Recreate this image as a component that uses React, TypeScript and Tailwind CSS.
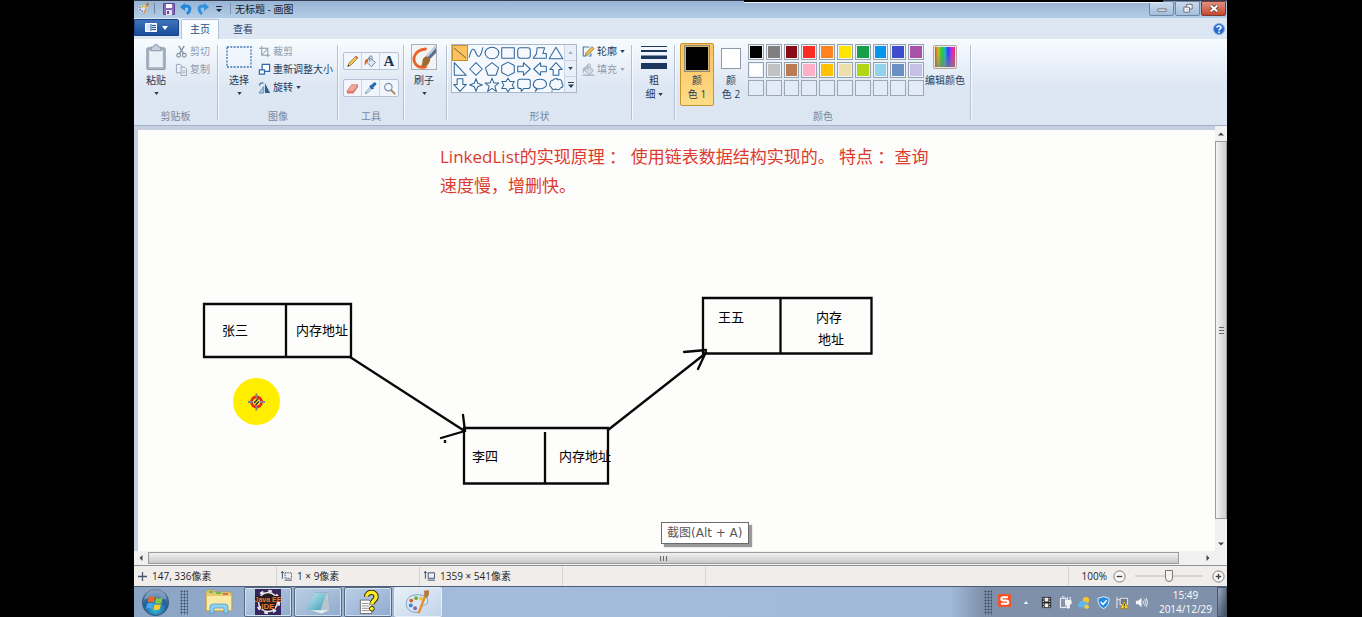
import type { ReactNode } from "react";

const SHAPES: { name: string; d: string }[] = [
  { name: "直线", d: "M2 3L14 13" },
  { name: "曲线", d: "M2 12C4 3 6 3 8 8S12 12 14 3" },
  { name: "椭圆", d: "M2 8a6 5 0 1 0 12 0a6 5 0 1 0-12 0" },
  { name: "矩形", d: "M2.5 3.5h11v9h-11z" },
  { name: "圆角矩形", d: "M4.5 3.5h7a2 2 0 0 1 2 2v5a2 2 0 0 1-2 2h-7a2 2 0 0 1-2-2v-5a2 2 0 0 1 2-2z" },
  { name: "多边形", d: "M5.500 3.500H12L10.500 8.500H13.500V12.500H2L5 8.500z" },
  { name: "三角形", d: "M8 3L14 13H2z" },
  { name: "直角三角形", d: "M3 2.500V13.500H13.500z" },
  { name: "菱形", d: "M8 2.500L13.500 8L8 13.500L2.500 8z" },
  { name: "五边形", d: "M8 2.500L13.800 7L11.500 13.500H4.500L2.200 7z" },
  { name: "六边形", d: "M8 2L13.500 5V11L8 14L2.500 11V5z" },
  { name: "右箭头", d: "M2.500 5.500h5v-3l6 5.500l-6 5.500v-3h-5z" },
  { name: "左箭头", d: "M13.500 5.500h-5v-3l-6 5.500l6 5.500v-3h5z" },
  { name: "上箭头", d: "M5.500 13.500v-5h-3l5.500-6l5.500 6h-3v5z" },
  { name: "下箭头", d: "M5.500 2.500v5h-3l5.500 6l5.500-6h-3v-5z" },
  { name: "四角星形", d: "M8 2.500L9.500 6.500L13.500 8L9.500 9.500L8 13.500L6.500 9.500L2.500 8L6.500 6.500z" },
  { name: "五角星形", d: "M8 2L9.600 6.300H14L10.500 9L11.800 13.600L8 11L4.200 13.600L5.500 9L2 6.300H6.400z" },
  { name: "六角星形", d: "M8 2L9.800 5H13.500L11.700 8L13.500 11H9.800L8 14L6.200 11H2.500L4.300 8L2.500 5H6.200z" },
  { name: "圆角矩形标注", d: "M4.500 3h7a2 2 0 0 1 2 2v4a2 2 0 0 1-2 2H8l-2.500 2.500v-2.500h-1a2 2 0 0 1-2-2v-4a2 2 0 0 1 2-2z" },
  { name: "椭圆形标注", d: "M5 11C0 9 2 3 8 3s8 6 2 8c-2 .5-3 .3-4 .2L4 13.500z" },
  { name: "云形标注", d: "M5 4c1-2 4-2 5-.5c2-1 4 1 3 3c2 1 1 4-1 4c-1 2-3 2-4 1c-2 1-4 0-4-1.500c-2-.5-2-3-.8-3.500C2.500 5 3.500 4 5 4zM4.500 12.500v1.500" },
];

const COLOURS = [
  { name: "黑色", bg: "bg-black" },
  { name: "灰色-50%", bg: "bg-[#7f7f7f]" },
  { name: "深红色", bg: "bg-[#8a0a15]" },
  { name: "红色", bg: "bg-[#fb2d22]" },
  { name: "橙色", bg: "bg-[#ff8420]" },
  { name: "黄色", bg: "bg-[#ffe600]" },
  { name: "绿色", bg: "bg-[#169e4a]" },
  { name: "青绿色", bg: "bg-[#0396ec]" },
  { name: "靛青色", bg: "bg-[#3d4ccc]" },
  { name: "紫色", bg: "bg-[#a852a8]" },
  { name: "白色", bg: "bg-white" },
  { name: "灰色-25%", bg: "bg-[#c2c2c2]" },
  { name: "褐色", bg: "bg-[#b97c55]" },
  { name: "玫瑰色", bg: "bg-[#ffb0c8]" },
  { name: "金色", bg: "bg-[#ffc103]" },
  { name: "浅黄色", bg: "bg-[#eddfad]" },
  { name: "酸橙色", bg: "bg-[#b1d614]" },
  { name: "淡青绿色", bg: "bg-[#92d2ea]" },
  { name: "蓝灰色", bg: "bg-[#6a8fc2]" },
  { name: "淡紫色", bg: "bg-[#c6bfe7]" },
];

function Caret({ muted = false }: { muted?: boolean }) {
  return (
    <svg viewBox="0 0 6 4" className="h-[3px] w-[5px] shrink-0" aria-hidden="true">
      <path d="M0 0H6L3 4z" fill={muted ? "#9aa6b6" : "#2b3d5b"} />
    </svg>
  );
}

function Group({ label, width, children }: { label: string; width: string; children: ReactNode }) {
  return (
    <section aria-label={label || undefined} className={`flex shrink-0 flex-col ${width}`}>
      <div className="flex min-h-0 flex-1">
        <div className="flex flex-1 flex-col">
          <div className="flex flex-1 items-start pt-[2px]">{children}</div>
          <div className="mb-[2px] h-[14px] text-center leading-[14px] text-[#7586a0]">{label}</div>
        </div>
        <div className="my-[5px] w-[2px] border-l border-[#b4c1d3] bg-white/70" />
      </div>
    </section>
  );
}

function BigButton({ text, icon, caret = true }: { text: string; icon: ReactNode; caret?: boolean }) {
  return (
    <button type="button" className="flex flex-col items-center whitespace-nowrap">
      <span className="flex h-[30px] items-center justify-center">{icon}</span>
      <span className="h-[18px] leading-[16px]">{text}</span>
      <span className="flex h-[6px] items-center">{caret && <Caret />}</span>
    </button>
  );
}

function SmallButton({ text, icon, muted = false, caret = false }: { text: string; icon: ReactNode; muted?: boolean; caret?: boolean }) {
  return (
    <button type="button" className={`flex h-[18px] items-center gap-[2px] whitespace-nowrap ${muted ? "text-[#8e9bae]" : ""}`}>
      {icon}
      <span>{text}</span>
      {caret && <span className="ml-[1px] flex"><Caret muted={muted} /></span>}
    </button>
  );
}

const ico = "h-[13px] w-[13px] shrink-0";

function PaletteIcon({ className }: { className: string }) {
  return (
    <svg viewBox="0 0 28 28" className={className} aria-hidden="true">
      <path d="M13 6C5 6 1 11 2 17c1 5 6 8 12 7c4-1 2-4 4-6s6-1 6-6c0-4-5-6-11-6z" fill="#d7e8f4" stroke="#7aa0bf" />
      <circle cx="7" cy="12" r="2" fill="#e2592c" />
      <circle cx="12" cy="9.500" r="2" fill="#69b33d" />
      <circle cx="6.500" cy="17" r="2" fill="#3d83cf" />
      <circle cx="11" cy="20" r="2" fill="#8d63b3" />
      <circle cx="17" cy="10" r="2" fill="#efc530" />
      <path d="M22 6L15 24" stroke="#e58f2e" strokeWidth="2.500" strokeLinecap="round" />
      <path d="M20 2c1 2 0 4 1 6l3 1c1-3 2-4 1-8z" fill="#b9773f" />
    </svg>
  );
}

function Pencil() {
  return (
    <svg viewBox="0 0 16 16" className={ico} aria-hidden="true">
      <path d="M2 14L3.500 10L12 1.500L14.500 4L6 12.500z" fill="#f4c252" stroke="#7d6435" strokeWidth=".8" />
      <path d="M11 2.500L12.500 1L15 3.500L13.500 5z" fill="#d9685b" />
      <path d="M2 14L2.800 11.800L4.200 13.200z" fill="#222" />
    </svg>
  );
}

function Bucket({ muted = false }: { muted?: boolean }) {
  return (
    <svg viewBox="0 0 16 16" className={ico} aria-hidden="true">
      <path d="M6 3L14 9L9 14.500L3.500 9z" fill={muted ? "#d3dae3" : "#dce9f4"} stroke={muted ? "#98a4b3" : "#5a7698"} />
      <path d="M7 8V2.500a1.500 1.500 0 0 1 3 0V6" fill="none" stroke={muted ? "#98a4b3" : "#5a7698"} />
      <path d="M5 4.500C1 5 .5 8 1 13C3 11 3 9 5 8z" fill={muted ? "#aeb7c3" : "#e4602e"} />
      {muted && <path d="M1 14h14v2H1z" fill="#b1bac6" />}
    </svg>
  );
}

function ToolBar({ children }: { children: ReactNode }) {
  return <div className="flex h-[18px] divide-x divide-[#ccd6e3] rounded-[2px] border border-[#b5c2d4] bg-[#f1f6fc]">{children}</div>;
}

function ToolButton({ name, children }: { name: string; children: ReactNode }) {
  return (
    <button type="button" aria-label={name} className="flex w-[18px] items-center justify-center">
      {children}
    </button>
  );
}

function TitleBar() {
  return (
    <header className="relative flex h-[18px] items-center border-t border-[#333c50] bg-linear-to-b from-[#98b4d4] to-[#b4cce6] pb-[2px] pl-[3px]">
      <PaletteIcon className="h-[13px] w-[13px]" />
      <span className="ml-[4px] h-[11px] w-px bg-[#6f87a5]" />
      <button type="button" aria-label="保存" className="ml-[8px]">
        <svg viewBox="0 0 12 12" className="h-[12px] w-[12px]">
          <path d="M.5.5h11v11H.5z" fill="#8669b5" stroke="#5e4691" />
          <path d="M3 1h6v4H3z" fill="#fff" />
          <path d="M3 7h6v5H3z" fill="#e7def4" />
          <path d="M4 8h2v3H4z" fill="#5e4691" />
        </svg>
      </button>
      <button type="button" aria-label="撤消" className="ml-[5px]">
        <svg viewBox="0 0 12 12" className="h-[12px] w-[12px]">
          <path d="M3 4C10 1 12 6 7 11" fill="none" stroke="#2386d8" strokeWidth="3" />
          <path d="M0 4L5 0V8z" fill="#2386d8" />
        </svg>
      </button>
      <button type="button" aria-label="重做" className="ml-[5px]">
        <svg viewBox="0 0 12 12" className="h-[12px] w-[12px]">
          <path d="M9 4C2 1 0 6 5 11" fill="none" stroke="#2f93dd" strokeWidth="3" />
          <path d="M12 4L7 0V8z" fill="#2f93dd" />
        </svg>
      </button>
      <button type="button" aria-label="自定义快速访问工具栏" className="ml-[7px]">
        <svg viewBox="0 0 6 6" className="h-[6px] w-[6px]">
          <path d="M0 0h6v1H0zM0 3h6L3 6z" fill="#1b2a40" />
        </svg>
      </button>
      <span className="ml-[8px] h-[11px] w-px bg-[#7d94b1]" />
      <h1 className="ml-[4px] leading-[14px] text-[#141c28]">无标题 - 画图</h1>
      <div className="ml-auto flex h-full gap-px pr-px">
        <button type="button" aria-label="最小化" className="flex w-[25px] items-center justify-center rounded-b-[2px] border border-[#6d86a6] bg-linear-to-b from-[#c9d9eb] to-[#a4bedb]">
          <svg viewBox="0 0 12 12" className="h-[11px] w-[12px]"><path d="M1.500 6.500h9v2.500h-9z" fill="#fff" stroke="#5f6873" /></svg>
        </button>
        <button type="button" aria-label="向下还原" className="flex w-[25px] items-center justify-center rounded-b-[2px] border border-[#6d86a6] bg-linear-to-b from-[#c9d9eb] to-[#a4bedb]">
          <svg viewBox="0 0 12 12" className="h-[11px] w-[12px]">
            <path d="M4.500 1.500h6v5h-6z" fill="#fff" stroke="#5f6873" />
            <path d="M1.500 4.500h6v5.500h-6z" fill="#fff" stroke="#5f6873" />
            <path d="M4 7h1.500v1H4z" fill="#5f6873" />
          </svg>
        </button>
        <button type="button" aria-label="关闭" className="flex w-[25px] items-center justify-center rounded-b-[2px] border border-[#7c3a34] bg-linear-to-b from-[#dd9080] to-[#c8452b]">
          <svg viewBox="0 0 12 12" className="h-[11px] w-[12px]">
            <path d="M2.500 3L9.500 9M9.500 3L2.500 9" stroke="#6d4640" strokeWidth="4" />
            <path d="M2.500 3L9.500 9M9.500 3L2.500 9" stroke="#fff" strokeWidth="2.200" />
          </svg>
        </button>
      </div>
      <div className="absolute -top-px right-[64px] left-[610px] h-[3px] border-b border-[#e8f1f5] bg-black" />
    </header>
  );
}

function Tabs() {
  return (
    <nav className="flex h-[21px] bg-[#dde7f4] pt-px">
      <button type="button" aria-label="画图" className="flex h-[17px] w-[45px] items-center justify-center gap-[5px] rounded-tr-[2px] border border-[#17448a] bg-linear-to-b from-[#3f74b8] to-[#1b4c9c]">
        <svg viewBox="0 0 12 9" className="h-[9px] w-[12px]">
          <path d="M.5.5h11v8H.5z" fill="#dbe8f8" stroke="#fff" />
          <path d="M6 1v7M7 2.500h4M7 4.500h4M7 6.500h4" stroke="#2a5ca8" />
        </svg>
        <svg viewBox="0 0 6 4" className="h-[4px] w-[6px]"><path d="M0 0h6L3 4z" fill="#fff" /></svg>
      </button>
      <button type="button" className="ml-[2px] w-[38px] rounded-t-[2px] border border-b-0 border-[#b3c3d9] bg-[#f9fcff] pb-px text-[#254a80]">主页</button>
      <button type="button" className="ml-[4px] w-[40px] text-[#2f415e]">查看</button>
      <button type="button" aria-label="帮助" className="mr-[2px] ml-auto">
        <svg viewBox="0 0 12 12" className="h-[12px] w-[12px]">
          <circle cx="6" cy="6" r="5.500" fill="#2968d2" stroke="#86abe0" />
          <path d="M4 4.700C4 2.500 8 2.500 8 4.700C8 6 6 6 6 7.400" fill="none" stroke="#fff" strokeWidth="1.500" />
          <circle cx="6" cy="9.200" r=".9" fill="#fff" />
        </svg>
      </button>
    </nav>
  );
}

function Ribbon() {
  return (
    <div className="flex h-[87px] overflow-hidden border-t border-b border-t-[#fafdff] border-b-[#a5b2c6] bg-linear-to-b from-[#f7fbff] via-[#dde7f3] via-55% to-[#dce6f3] text-[#26395a]">
      <Group label="剪贴板" width="w-[85px]">
        <div className="ml-[11px]">
          <BigButton
            text="粘贴"
            icon={
              <svg viewBox="0 0 22 28" className="h-[27px] w-[22px]">
                <rect x="1.500" y="4" width="19" height="22.500" rx="1" fill="#a9b4c3" stroke="#8996a8" />
                <path d="M4 7h14v17H4z" fill="#eaf0f7" />
                <path d="M6 3h2.500a2.500 2.500 0 0 1 5 0H16v4H6z" fill="#c7d0dc" stroke="#8996a8" />
              </svg>
            }
          />
        </div>
        <div className="ml-[8px]">
          <SmallButton muted text="剪切" icon={
            <svg viewBox="0 0 14 14" className={ico}>
              <path d="M4 1L9 9M10 1L5 9" stroke="#8793a5" strokeWidth="1.500" />
              <circle cx="4" cy="11" r="2" fill="none" stroke="#8793a5" strokeWidth="1.300" />
              <circle cx="10" cy="11" r="2" fill="none" stroke="#8793a5" strokeWidth="1.300" />
            </svg>} />
          <SmallButton muted text="复制" icon={
            <svg viewBox="0 0 14 14" className={ico}>
              <path d="M1.500 1.500h4l2 2v7h-6z" fill="#eaf0f7" stroke="#97a3b4" />
              <path d="M6.500 4.500h4l2 2v7h-6z" fill="#eaf0f7" stroke="#97a3b4" />
              <path d="M8 8.500h3M8 10.500h3" stroke="#97a3b4" />
            </svg>} />
        </div>
      </Group>

      <Group label="图像" width="w-[120px]">
        <div className="ml-[7px]">
          <BigButton text="选择" icon={
            <svg viewBox="0 0 26 22" className="h-[22px] w-[26px]">
              <rect x="1" y="1" width="24" height="20" fill="#f0f6fd" fillOpacity=".6" stroke="#3b75b3" strokeWidth="1.300" strokeDasharray="2 1.300" />
            </svg>} />
        </div>
        <div className="ml-[6px]">
          <SmallButton muted text="裁剪" icon={
            <svg viewBox="0 0 14 14" className={ico}><path d="M4 1v10h9M1 3.500h9.500V13M4 11L11 3" fill="none" stroke="#8592a5" /></svg>} />
          <SmallButton text="重新调整大小" icon={
            <svg viewBox="0 0 14 14" className={ico}>
              <path d="M4.500 1.500h8v7.500h-8z" fill="#fff" stroke="#2f68a8" strokeWidth="1.300" />
              <path d="M1.500 7.500h5.500v4.500h-5.500z" fill="#fff" stroke="#2f68a8" strokeWidth="1.300" />
            </svg>} />
          <SmallButton caret text="旋转" icon={
            <svg viewBox="0 0 14 14" className={ico}>
              <path d="M7.500 2.500V13H13z" fill="#2b5d92" />
              <path d="M6 6v7H1z" fill="#a9cbe6" stroke="#5586b4" strokeWidth=".8" />
              <path d="M1.500 5C2 2 4 1.500 6 2.500" fill="none" stroke="#3a7ab8" strokeWidth="1.300" />
            </svg>} />
        </div>
      </Group>

      <Group label="工具" width="w-[66px]">
        <div className="mt-[10px] ml-[4px] flex flex-col gap-[9px]">
          <ToolBar>
            <ToolButton name="铅笔"><Pencil /></ToolButton>
            <ToolButton name="用颜色填充"><Bucket /></ToolButton>
            <ToolButton name="文本"><span className="font-['Liberation_Serif',serif] text-[15px] font-bold leading-[16px] text-[#1c3350]">A</span></ToolButton>
          </ToolBar>
          <ToolBar>
            <ToolButton name="橡皮擦">
              <svg viewBox="0 0 14 14" className={ico}>
                <path d="M6 3h7L8 10H1z" fill="#f4a79c" stroke="#c8665b" strokeWidth=".7" />
                <path d="M1 10h7v2.500H1zM8 10l5-7v2.500l-5 7z" fill="#df7468" />
              </svg>
            </ToolButton>
            <ToolButton name="颜色选取器">
              <svg viewBox="0 0 14 14" className={ico}>
                <path d="M1.500 12.500L2.500 10L7 5.500L8.500 7L4 11.500z" fill="#dcecfa" stroke="#5c7fa5" strokeWidth=".8" />
                <path d="M6.500 4L10 7.500" stroke="#204e8b" strokeWidth="2" />
                <path d="M8 5.500L11.500 2" stroke="#2b6bb8" strokeWidth="3.500" strokeLinecap="round" />
              </svg>
            </ToolButton>
            <ToolButton name="放大镜">
              <svg viewBox="0 0 14 14" className={ico}>
                <path d="M8.500 8.500L12.500 12.500" stroke="#b08a52" strokeWidth="2.200" strokeLinecap="round" />
                <circle cx="5.800" cy="5.500" r="4" fill="#edf6fd" stroke="#7f8fa3" strokeWidth="1.200" />
              </svg>
            </ToolButton>
          </ToolBar>
        </div>
      </Group>

      <Group label="" width="w-[43px]">
        <div className="ml-[6px]">
          <BigButton text="刷子" icon={
            <svg viewBox="0 0 26 26" className="h-[26px] w-[26px]">
              <rect x=".5" y=".5" width="25" height="25" fill="#f3f3f3" stroke="#aab0b8" />
              <path d="M13 5C3 6-1 14 3 20c2 3 6 4 10 3" fill="none" stroke="#e9622b" strokeWidth="2.800" strokeLinecap="round" transform="translate(1.500 0)" />
              <path d="M25 1v8l-7 7l-4-3z" fill="#5b6f91" />
              <path d="M25 1L14 13l2 1L25 4z" fill="#c9d5e5" />
              <path d="M12 15c1-2 3-3 5-2s3 3 1 6c-2 4-6 4-8 3c2-2 1-5 2-7z" fill="#a16a2f" />
            </svg>} />
        </div>
      </Group>

      <Group label="形状" width="w-[185px]">
        <div className="mt-[2px] ml-[3px] flex h-[49px] border border-[#a9b7cb] bg-[#f5f9fe]">
          <div className="grid grid-cols-7">
            {SHAPES.map((s, i) => (
              <button key={s.name} type="button" aria-label={s.name} className={`h-[16px] w-[16px] ${i === 0 ? "border border-[#c5912f] bg-[#fbc25e]" : ""}`}>
                <svg viewBox={i === 0 ? "1 1 14 14" : "1 1 14 14"} className="h-full w-full">
                  <path d={s.d} fill="none" stroke={i === 0 ? "#66552f" : "#2d6699"} strokeWidth=".9" strokeLinejoin="round" />
                </svg>
              </button>
            ))}
          </div>
          <div className="flex w-[12px] flex-col divide-y divide-[#cbd6e4] border-l border-[#cbd6e4] bg-[#e8eff8]">
            <button type="button" aria-label="上一行" className="flex flex-1 items-center justify-center"><svg viewBox="0 0 6 4" className="h-[3px] w-[5px]"><path d="M0 4h6L3 0z" fill="#a3afc0" /></svg></button>
            <button type="button" aria-label="下一行" className="flex flex-1 items-center justify-center"><Caret /></button>
            <button type="button" aria-label="更多形状" className="flex flex-1 items-center justify-center"><svg viewBox="0 0 6 6" className="h-[6px] w-[6px]"><path d="M0 0h6v1H0zM0 2.500h6L3 6z" fill="#2b3d5b" /></svg></button>
          </div>
        </div>
        <div className="ml-[5px]">
          <SmallButton caret text="轮廓" icon={
            <svg viewBox="0 0 16 16" className={ico}>
              <path d="M9 2.500H1.500v11h4M11 10v3.500H8" fill="none" stroke="#3d76ab" strokeWidth="1.300" />
              <path d="M4 13L5 9.500L12 2L15 4.500L7.500 12z" fill="#f1bd4e" stroke="#7d6435" strokeWidth=".8" />
            </svg>} />
          <SmallButton muted caret text="填充" icon={<Bucket muted />} />
        </div>
      </Group>

      <Group label="" width="w-[43px]">
        <button type="button" className="ml-[8px] flex flex-col items-center pt-[4px] leading-[14px]">
          <svg viewBox="0 0 26 23" className="h-[23px] w-[26px]"><path d="M0 0h26v1H0zM0 4h26v2H0zM0 9.500h26v3.500H0zM0 17h26v6H0z" fill="#1c375f" /></svg>
          <span className="mt-[4px]">粗</span>
          <span className="flex items-center gap-[2px]">细<Caret /></span>
        </button>
      </Group>

      <Group label="颜色" width="w-[296px]">
        <button type="button" className="mt-px ml-[4px] flex h-[63px] w-[34px] flex-col items-center rounded-[2px] border border-[#c8922f] bg-linear-to-b from-[#fbc261] to-[#fddc86] leading-[14px]">
          <span className="mt-px h-[27px] w-[26px] border border-[#8f8a78] bg-black outline-1 -outline-offset-2 outline-[#d5b878]" />
          <span className="mt-[1px]">颜</span>
          <span>色 1</span>
        </button>
        <button type="button" className="ml-[4px] flex w-[26px] flex-col items-center leading-[14px]">
          <span className="mt-[6px] h-[21px] w-[20px] border border-[#8e99a8] bg-white" />
          <span className="mt-[4px]">颜</span>
          <span className="whitespace-nowrap">色 2</span>
        </button>
        <div className="mt-[2px] ml-[4px] grid w-[176px] grid-cols-10 gap-[2px]">
          {COLOURS.map((c) => (
            <button key={c.name} type="button" aria-label={c.name} className="h-[16px] border border-[#98a1ae] bg-[#eef3f8] p-px">
              <span className={`block h-full w-full ${c.bg}`} />
            </button>
          ))}
          {Array.from({ length: 10 }, (_, i) => (
            <button key={i} type="button" aria-label={`自定义颜色 ${i + 1}`} className="h-[16px] border border-[#9aa7b9] bg-[#e3ebf6]" />
          ))}
        </div>
        <div className="ml-[1px]">
          <BigButton caret={false} text="编辑颜色" icon={
            <svg viewBox="0 0 24 24" className="h-[24px] w-[24px]">
              <defs>
                <linearGradient id="hue">
                  <stop offset="0" stopColor="#f0402a" /><stop offset=".15" stopColor="#c6c51c" /><stop offset=".35" stopColor="#1fcb3c" />
                  <stop offset=".5" stopColor="#26b4d0" /><stop offset=".65" stopColor="#2546ee" /><stop offset=".85" stopColor="#d32be0" /><stop offset="1" stopColor="#ee3550" />
                </linearGradient>
                <linearGradient id="fade" x1="0" x2="0" y1="0" y2="1"><stop offset=".3" stopColor="#808080" stopOpacity="0" /><stop offset="1" stopColor="#808080" stopOpacity=".7" /></linearGradient>
              </defs>
              <rect x=".5" y=".5" width="23" height="23" rx="1.500" fill="#efe5e0" stroke="#b3a6a4" />
              <path d="M2 2h20v20H2z" fill="url(#hue)" />
              <path d="M2 2h20v20H2z" fill="url(#fade)" />
            </svg>} />
        </div>
      </Group>
    </div>
  );
}

function Drawing() {
  const colon = <span className="font-['Noto_Sans_CJK_TC',sans-serif]">：</span>;
  return (
    <main className="relative min-w-0 flex-1 overflow-hidden bg-[#fdfdfc] text-[13px] leading-[22px] text-black">
      <svg viewBox="138 130 760 420" className="absolute top-0 left-0 h-[420px] w-[760px]" fill="none" stroke="#080808" strokeWidth="2.300" aria-hidden="true">
        <path d="M204 304H351V357H204zM286 304V358" />
        <path d="M464 428H608V483.500H464zM545 432V483" />
        <path d="M703 298H871.500V353.500H703zM780.500 298V353" />
        <path d="M350 357L463 430M463 415L465 431L441 438M608 430L706 353M684 352L706 350M706 352L698 369" strokeLinecap="round" />
        <path d="M445 440v3" />
        <circle cx="256.500" cy="401.500" r="23.500" fill="#ffee00" stroke="none" />
        <circle cx="256.500" cy="402" r="5" stroke="#ed2415" strokeWidth="2.800" />
        <path d="M256.500 393.500v5M256.500 405.500v5M248 402h5M260 402h5" stroke="#8a7f8c" strokeWidth="2" />
        <path d="M254 403L258 399M255.500 405L259 401.500" stroke="#272b55" strokeWidth="1.400" />
      </svg>
      <div className="absolute top-[12px] left-[302px] text-[17px] leading-[29px] whitespace-nowrap text-[#dc3a2f]">
        <div className="flex whitespace-pre">
          <span>LinkedList的实现原理</span>
          {colon}
          <span>{"  使用链表数据结构实现的。 特点"}</span>
          {colon}
          <span>{" 查询"}</span>
        </div>
        <div>速度慢，增删快。</div>
      </div>
      <span className="absolute top-[189px] left-[84px]">张三</span>
      <span className="absolute top-[189px] left-[158px]">内存地址</span>
      <span className="absolute top-[315px] left-[334px]">李四</span>
      <span className="absolute top-[315px] left-[421px]">内存地址</span>
      <span className="absolute top-[176px] left-[580px]">王五</span>
      <span className="absolute top-[176px] left-[678px]">内存</span>
      <span className="absolute top-[198px] left-[680px]">地址</span>
      <div role="tooltip" className="absolute top-[392px] left-[523px] h-[22px] border border-[#6b6b6b] bg-white px-[5px] font-['DejaVu_Sans','Noto_Sans_CJK_SC',sans-serif] text-[12px] leading-[20px] text-[#585858] shadow-[3px_3px_1px_#9a9a9a]">截图(Alt + A)</div>
    </main>
  );
}

function Arrow({ d }: { d: string }) {
  return <svg viewBox="0 0 6 6" className="h-[6px] w-[6px]" aria-hidden="true"><path d={d} fill="#444" /></svg>;
}

function StatusBar() {
  const cell = "flex w-[143px] shrink-0 items-center gap-[5px] border-r border-[#d8d5d3] pl-[4px]";
  return (
    <footer className="flex h-[21px] border-t border-[#8f9194] bg-[#f0edeb] text-[#1f1f1f]">
      <div className={cell}>
        <svg viewBox="0 0 10 10" className="h-[9px] w-[9px]"><path d="M5 0v10M0 5h10" stroke="#4a5568" strokeWidth="1.400" /></svg>147, 336像素
      </div>
      <div className={cell}>
        <svg viewBox="0 0 12 10" className="h-[10px] w-[11px]"><path d="M1.500 0v8M0 2l1.500-2L3 2M4 9.500h8" fill="none" stroke="#334a6c" /><path d="M4.500 1.500h7v6h-7z" fill="none" stroke="#334a6c" strokeDasharray="1.500 1" /></svg>1 × 9像素
      </div>
      <div className={cell}>
        <svg viewBox="0 0 12 10" className="h-[10px] w-[11px]"><path d="M1.500 0v8M0 2l1.500-2L3 2M4 9.500h8M4.500 1.500h7v6h-7z" fill="none" stroke="#334a6c" /></svg>1359 × 541像素
      </div>
      <div className={cell} />
      <div className="ml-auto flex items-center border-l border-[#d8d5d3] pr-[2px] pl-[13px]">
        <label htmlFor="zoom">100%</label>
        <button type="button" aria-label="缩小" className="ml-[6px]"><svg viewBox="0 0 14 14" className="h-[13px] w-[13px]"><circle cx="7" cy="7" r="6" fill="#fbfbfb" stroke="#747474" /><path d="M4 7h6" stroke="#444" strokeWidth="1.500" /></svg></button>
        <input
          id="zoom"
          type="range"
          min="0"
          max="100"
          defaultValue="50"
          className="mx-[9px] h-[14px] w-[68px] appearance-none bg-linear-to-b from-transparent from-45% via-[#9a9a9a] via-50% to-transparent to-55% [&::-webkit-slider-thumb]:h-[12px] [&::-webkit-slider-thumb]:w-[8px] [&::-webkit-slider-thumb]:appearance-none [&::-webkit-slider-thumb]:rounded-b-[4px] [&::-webkit-slider-thumb]:border [&::-webkit-slider-thumb]:border-[#777] [&::-webkit-slider-thumb]:bg-[#f3f3f3]"
        />
        <button type="button" aria-label="放大"><svg viewBox="0 0 14 14" className="h-[13px] w-[13px]"><circle cx="7" cy="7" r="6" fill="#fbfbfb" stroke="#747474" /><path d="M4 7h6M7 4v6" stroke="#444" strokeWidth="1.500" /></svg></button>
      </div>
    </footer>
  );
}

function Grip() {
  return <span className="h-[25px] w-[8px] shrink-0 bg-[radial-gradient(circle,#3f4f66_0.8px,transparent_1.2px)] bg-[size:3px_3px]" />;
}

function TaskButton({ name, active = false, children }: { name: string; active?: boolean; children: ReactNode }) {
  return (
    <button type="button" aria-label={name} className={`flex h-full w-[48px] items-center justify-center rounded-[2px] border ${active ? "border-[#e6eef8] bg-linear-to-br from-[#e9f0f8] to-[#c2d4e9]" : "border-[#56697f] bg-linear-to-br from-[#bccee5] to-[#8fabcf] shadow-[inset_0_0_0_1px_#d3e0f0]"}`}>
      {children}
    </button>
  );
}

const tray = "h-[13px] w-[13px]";

function TaskBar() {
  return (
    <div className="flex h-[31px] items-center border-t border-[#4c5e78] bg-linear-to-r from-[#8ba3c3] via-[#a3bcdb] via-30% to-[#a0b9d8]">
      <button type="button" aria-label="开始" className="ml-[7px] shrink-0">
        <svg viewBox="0 0 30 30" className="h-[29px] w-[29px]">
          <defs><radialGradient id="orb" cx=".5" cy=".75" r=".7"><stop offset="0" stopColor="#38bfe0" /><stop offset=".6" stopColor="#22609a" /><stop offset="1" stopColor="#5c7fa6" /></radialGradient></defs>
          <circle cx="15" cy="15" r="13.500" fill="url(#orb)" stroke="#315178" />
          <path d="M3.500 12a11.500 11 0 0 1 23 0c-8-3-15-3-23 0z" fill="#fff" opacity=".28" />
          <path d="M8 9.500c2.500-1.500 4.500-1 6.500 0L13.200 15c-2-1-4-1.200-6.500 0z" fill="#f0642b" />
          <path d="M15.700 10c2.300 1 4.300 1 6.800 0L21 15.500c-2.300 1-4.300 1-6.600 0z" fill="#8bc63f" />
          <path d="M6.400 16.200c2.500-1.200 4.500-1 6.500 0l-1.400 5.300c-2-1-4-1.200-6.300 0z" fill="#4aa8ec" />
          <path d="M14.200 16.700c2.300 1 4.200 1 6.500 0l-1.400 5.300c-2.300 1-4.300 1-6.500 0z" fill="#fbcb2c" />
        </svg>
      </button>
      <span className="ml-[10px] flex"><Grip /></span>
      <div className="ml-[8px] flex h-full gap-[2px]">
        <button type="button" aria-label="资源管理器" className="flex w-[46px] items-center justify-center">
          <svg viewBox="0 0 28 26" className="h-[26px] w-[28px]">
            <path d="M1 3l2-2h6l1 2h15l2 2v17H1z" fill="#e8c96b" stroke="#b99842" strokeWidth=".7" />
            <path d="M2 7h24v14H2z" fill="#faeaa6" />
            <path d="M4 2h4v2H4zM11 3h5v2h-5z" fill="#70b75f" /><path d="M18 4h5v2h-5z" fill="#da6b5c" />
            <path d="M5 24v-6q0-3 3-3h12q3 0 3 3v6h-4v-5H9v5z" fill="#91d0f0" stroke="#4e9fcf" strokeWidth=".8" />
          </svg>
        </button>
        <TaskButton name="Java EE IDE">
          <svg viewBox="0 0 26 26" className="h-[26px] w-[26px]">
            <path d="M0 0h26v26H0z" fill="#35265c" />
            <circle cx="13" cy="13" r="9.500" fill="#25191d" stroke="#e7e5e8" strokeWidth="1.500" />
            <circle cx="13" cy="13" r="11" fill="none" stroke="#e7e5e8" strokeWidth="2.500" strokeDasharray="3.600 5.040" />
            <path d="M0 7h26v6H0zM6 13h14v7H6z" fill="#2b1a20" />
            <text x="13" y="13" textAnchor="middle" fontSize="7" fontWeight="bold" fontFamily="Liberation Sans, sans-serif" fill="#e87c2e">Java EE</text>
            <text x="13" y="19.500" textAnchor="middle" fontSize="8" fontWeight="bold" fontFamily="Liberation Sans, sans-serif" fill="#e87c2e">IDE</text>
          </svg>
        </TaskButton>
        <TaskButton name="记事本">
          <svg viewBox="0 0 26 26" className="h-[25px] w-[26px]">
            <path d="M9 3h14l2 18l-8 4L3 21z" fill="#e9eef2" stroke="#8a9aa8" strokeWidth=".6" />
            <defs><linearGradient id="note" x1="0" x2="1" y1="0" y2="1"><stop offset="0" stopColor="#c8ebf3" /><stop offset="1" stopColor="#3d9db7" /></linearGradient></defs>
            <path d="M9 3h13l-6 18H1z" fill="url(#note)" />
            <path d="M22 3l3 18l-9 0z" fill="#b7c4cd" />
          </svg>
        </TaskButton>
        <TaskButton name="帮助文档">
          <svg viewBox="0 0 24 26" className="h-[25px] w-[23px]">
            <path d="M3.500 10.500h9l3 3v11h-12z" fill="#fff" stroke="#6b6b6b" />
            <path d="M5 14h7M5 16.500h8M5 19h8M5 21.500h8" stroke="#8d8d8d" />
            <path d="M10 7C10 1 20 1 20 7c0 4-4.500 4-4.500 8" fill="none" stroke="#2e2b12" strokeWidth="5.500" />
            <path d="M10 7C10 1 20 1 20 7c0 4-4.500 4-4.500 8" fill="none" stroke="#ffed22" strokeWidth="3.500" />
            <circle cx="15.500" cy="19.500" r="2.500" fill="#ffed22" stroke="#2e2b12" />
          </svg>
        </TaskButton>
        <TaskButton name="画图" active><PaletteIcon className="h-[27px] w-[28px]" /></TaskButton>
      </div>
      <div className="ml-auto flex h-full items-center bg-linear-to-r from-transparent to-[#7f90aa] to-12% pl-[34px]">
        <Grip />
        <button type="button" aria-label="搜狗输入法" className="mb-[4px] ml-[6px]">
          <svg viewBox="0 0 13 13" className="h-[13px] w-[13px]"><rect width="13" height="13" rx="1" fill="#f0542a" /><path d="M10 3.200H5.500C2.500 3.200 2.500 6.500 5.500 6.500H8C11 6.500 11 9.800 8 9.800H3" fill="none" stroke="#fff" strokeWidth="2" /></svg>
        </button>
        <button type="button" aria-label="显示隐藏的图标" className="ml-[12px]"><svg viewBox="0 0 6 4" className="h-[3px] w-[6px]"><path d="M0 4h6L3 0z" fill="#edf2f8" /></svg></button>
        <div className="ml-[11px] flex gap-[6px]">
          <svg viewBox="0 0 14 14" className={tray}><path d="M2 1h10v12H2z" fill="#222" /><path d="M5 2h4v4H5zM5 8h4v4H5z" fill="#eee" /><path d="M3.500 2v11M10.500 2v11" stroke="#fff" strokeDasharray="1.500 1.500" /></svg>
          <svg viewBox="0 0 14 14" className={tray}><path d="M1.500 2.500h6v10h-6z" fill="#8895a8" stroke="#fff" /><path d="M3 1h3M9 1v4M12 1v4M7 5h6v3l-2 2v3H9v-3L7 8z" fill="#f3f3f3" stroke="#fff" /></svg>
          <svg viewBox="0 0 14 14" className={tray}><circle cx="8.500" cy="4.500" r="3.500" fill="#fbc12e" /><path d="M1 8a3 3 0 0 1 5-2a3 3 0 0 1 2 6H3a2 2 0 0 1-2-4z" fill="#63b6ec" /><path d="M7 11c2-3 4-2 5 1c-1 2-4 2-5 1z" fill="#f8cf35" /></svg>
          <svg viewBox="0 0 14 14" className={tray}><path d="M7 .7L13 2.500C13 8 11.500 11.500 7 13.500C2.500 11.500 1 8 1 2.500z" fill="#238be0" stroke="#e8f4ff" /><path d="M4 6.500L6.500 9L10.500 4.500" fill="none" stroke="#fff" strokeWidth="1.600" /></svg>
          <svg viewBox="0 0 14 14" className={tray}><path d="M1 1v12M1 4h4" stroke="#eee" /><path d="M4.500 2.500h8v7h-8z" fill="#6c7a8d" stroke="#eee" /><path d="M9 5.500L13.500 13.500H4.500z" fill="#ffd022" stroke="#8c7110" strokeWidth=".6" /><path d="M9 8v3M9 12v1" stroke="#222" /></svg>
          <svg viewBox="0 0 14 14" className={tray}><path d="M1 5h2.500L7 2v10L3.500 9H1z" fill="#f4f6f9" /><path d="M8.500 5q1.200 2 0 4M10.300 3.500q2.200 3.500 0 7M12 2q3 5 0 10" fill="none" stroke="#f4f6f9" /></svg>
        </div>
        <div className="ml-[11px] text-center leading-[14px] text-white">
          <div>15:49</div>
          <div>2014/12/29</div>
        </div>
        <button type="button" aria-label="显示桌面" className="ml-[5px] h-full w-[10px] border border-[#48576d] bg-linear-to-br from-[#99a8bd] to-[#3e4b61]" />
      </div>
    </div>
  );
}

export default function App() {
  return (
    <div className="min-h-screen bg-black pr-[135px] pl-[134px] font-['Open_Sans','Noto_Sans_CJK_SC',sans-serif] text-[10px]">
      <div className="flex min-h-screen flex-col overflow-hidden">
        <TitleBar />
        <Tabs />
        <Ribbon />
        <div className="flex min-h-[425px] flex-1 bg-[#c4d0e1]">
          <div className="flex min-w-0 flex-1 pt-[4px] pl-[4px]"><Drawing /></div>
          <div className="flex w-[12px] flex-col bg-[#f1f1f1]">
            <button type="button" aria-label="向上滚动" className="flex h-[15px] items-center justify-center"><Arrow d="M0 4.500h6L3 1.500z" /></button>
            <div className="flex flex-1 items-center justify-center border border-[#9b9b9b] bg-linear-to-r from-[#f4f4f4] to-[#cfcfcf]">
              <span className="h-[7px] w-[5px] border-y border-[#666] bg-linear-to-b from-transparent from-40% via-[#666] via-50% to-transparent to-60%" />
            </div>
            <button type="button" aria-label="向下滚动" className="flex h-[32px] items-end justify-center pb-[4px]"><Arrow d="M0 1.500h6L3 4.500z" /></button>
          </div>
        </div>
        <div className="flex h-[14px] bg-[#f1f1f1]">
          <button type="button" aria-label="向左滚动" className="flex w-[14px] items-center justify-center"><Arrow d="M4.500 0v6L1.500 3z" /></button>
          <div className="my-[1px] flex flex-1 items-center justify-center border border-[#9b9b9b] bg-linear-to-b from-[#f1f1f1] to-[#c9c9c9]">
            <span className="h-[5px] w-[7px] border-x border-[#666] bg-linear-to-r from-transparent from-40% via-[#666] via-50% to-transparent to-60%" />
          </div>
          <button type="button" aria-label="向右滚动" className="flex w-[48px] items-center justify-center pl-[10px]"><Arrow d="M1.500 0v6L4.500 3z" /></button>
        </div>
        <StatusBar />
        <TaskBar />
      </div>
    </div>
  );
}
